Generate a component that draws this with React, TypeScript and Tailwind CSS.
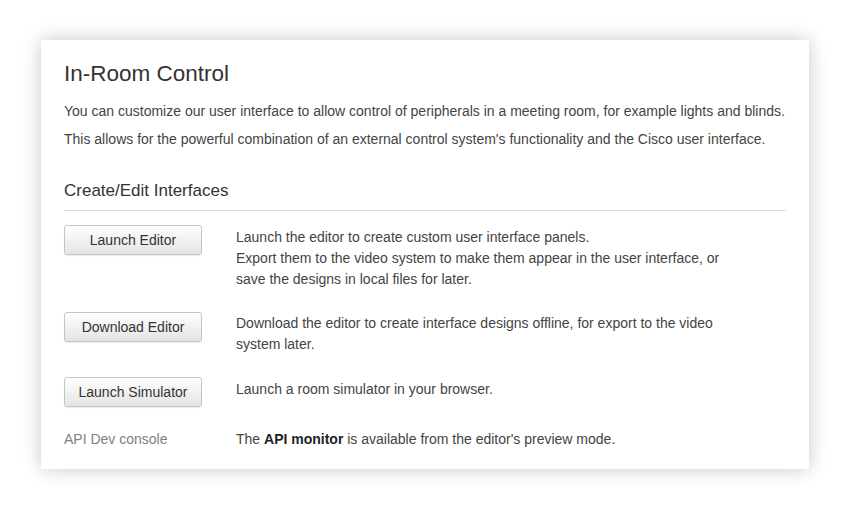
import React from "react";

const Btn = ({ label }: { label: string }) => (
  <button className="w-[138px] h-[30px] shrink-0 rounded-[3px] border border-[#c4c4c4] bg-gradient-to-b from-[#ffffff] to-[#e4e4e4] text-[14px] leading-[20px] text-[#333] shadow-[0_1px_1px_rgba(0,0,0,0.08)]">
    {label}
  </button>
);

export default function App() {
  return (
    <div className="min-h-[510px] w-[850px] bg-white pt-[40px] font-['Liberation_Sans',Arial,sans-serif] text-[#333]">
      <div className="mx-auto w-[768px] bg-white px-[23px] pt-[21px] pb-[19px] shadow-[0_0_18px_rgba(0,0,0,0.22)]">
        <h1 className="text-[22.5px] leading-[26px] text-[#333]">In-Room Control</h1>
        <p className="mt-[14px] text-[14px] leading-[20px] text-[#444]">
          You can customize our user interface to allow control of peripherals in a meeting room, for example lights and blinds.
        </p>
        <p className="mt-[8px] text-[14px] leading-[20px] text-[#444]">
          This allows for the powerful combination of an external control system's functionality and the Cisco user interface.
        </p>
        <h2 className="mt-[31px] text-[17px] leading-[22px] text-[#333]">Create/Edit Interfaces</h2>
        <div className="mt-[8px] h-px bg-[#dcdcdc]" />
        <div className="mt-[14px] flex flex-col gap-[22px] text-[14px] leading-[21px] text-[#444]">
          <div className="flex items-start">
            <div className="w-[172px] shrink-0">
              <Btn label="Launch Editor" />
            </div>
            <div className="mt-[1.5px] w-[490px]">
              Launch the editor to create custom user interface panels.
              <br />
              Export them to the video system to make them appear in the user interface, or save the designs in local files for later.
            </div>
          </div>
          <div className="flex items-start">
            <div className="w-[172px] shrink-0">
              <Btn label="Download Editor" />
            </div>
            <div className="mt-[1.5px] w-[490px]">
              Download the editor to create interface designs offline, for export to the video system later.
            </div>
          </div>
          <div className="flex items-start">
            <div className="w-[172px] shrink-0">
              <Btn label="Launch Simulator" />
            </div>
            <div className="mt-[1.5px] w-[490px]">Launch a room simulator in your browser.</div>
          </div>
          <div className="flex items-start">
            <div className="w-[172px] shrink-0 text-[#808080]">API Dev console</div>
            <div className="w-[490px]">
              The <b className="font-bold text-[#222]">API monitor</b> is available from the editor's preview mode.
            </div>
          </div>
        </div>
      </div>
    </div>
  );
}
